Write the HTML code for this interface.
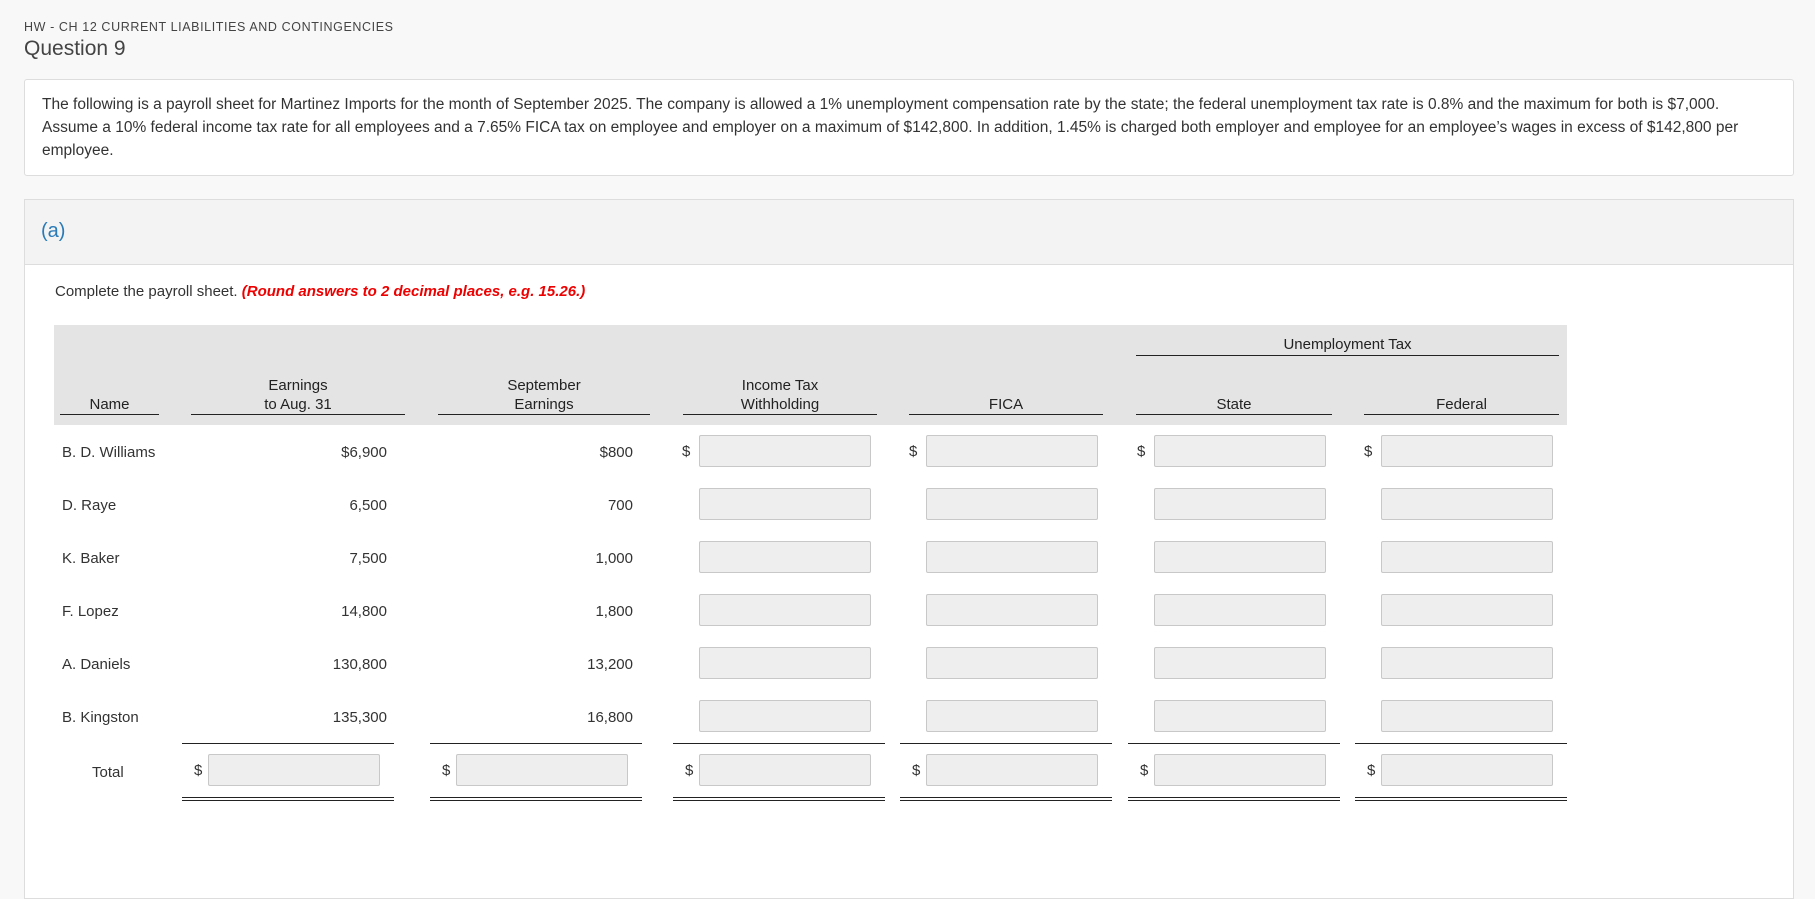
<!DOCTYPE html>
<html><head><meta charset="utf-8"><style>
body{margin:0;width:1815px;height:832px;background:#f8f8f8;font-family:"Liberation Sans",sans-serif;color:#333;position:relative;overflow:hidden}
.a{position:absolute;white-space:nowrap}
.inp{position:absolute;width:172px;height:32px;background:#eee;border:1px solid #c8c8c8;border-radius:2px;box-sizing:border-box}
.d{position:absolute;font-size:15px;color:#333}
.hl{position:absolute;height:0;border-top:1.5px solid #222}
.hd{position:absolute;font-size:15px;text-align:center;line-height:19px;color:#222}
.r{position:absolute;font-size:15px;text-align:right}
</style></head><body>
<div class="a" style="left:24px;top:20px;font-size:12.5px;letter-spacing:0.6px;color:#444">HW - CH 12 CURRENT LIABILITIES AND CONTINGENCIES</div>
<div class="a" style="left:24px;top:37px;font-size:21px;color:#444">Question 9</div>
<div class="a" style="left:24px;top:79px;width:1770px;height:97px;background:#fff;border:1px solid #ddd;border-radius:3px;box-sizing:border-box"></div>
<div class="a" style="left:42px;top:93px;font-size:15.5px;line-height:23px;color:#333;white-space:normal;width:1700px">The following is a payroll sheet for Martinez Imports for the month of September 2025. The company is allowed a 1% unemployment compensation rate by the state; the federal unemployment tax rate is 0.8% and the maximum for both is $7,000. Assume a 10% federal income tax rate for all employees and a 7.65% FICA tax on employee and employer on a maximum of $142,800. In addition, 1.45% is charged both employer and employee for an employee’s wages in excess of $142,800 per employee.</div>
<div class="a" style="left:24px;top:199px;width:1770px;height:700px;background:#fff;border:1px solid #ddd;box-sizing:border-box"></div>
<div class="a" style="left:25px;top:200px;width:1768px;height:64px;background:#f3f3f3;border-bottom:1px solid #ddd"></div>
<div class="a" style="left:41px;top:220px;font-size:20px;color:#2a7ab8">(a)</div>
<div class="a" style="left:55px;top:283px;font-size:15px">Complete the payroll sheet. <i style="color:#e00;font-weight:bold">(Round answers to 2 decimal places, e.g. 15.26.)</i></div>
<div class="a" style="left:54px;top:325px;width:1513px;height:100px;background:#e4e4e4"></div>
<div class="hd" style="left:1136px;top:335px;width:423px">Unemployment Tax</div>
<div class="hl" style="left:1136px;top:355px;width:423px"></div>
<div class="hd" style="left:60px;top:395px;width:99px">Name</div>
<div class="hd" style="left:191px;top:376px;width:214px">Earnings<br>to Aug. 31</div>
<div class="hd" style="left:438px;top:376px;width:212px">September<br>Earnings</div>
<div class="hd" style="left:683px;top:376px;width:194px">Income Tax<br>Withholding</div>
<div class="hd" style="left:909px;top:395px;width:194px">FICA</div>
<div class="hd" style="left:1136px;top:395px;width:196px">State</div>
<div class="hd" style="left:1364px;top:395px;width:195px">Federal</div>
<div class="hl" style="left:60px;top:414px;width:99px"></div>
<div class="hl" style="left:191px;top:414px;width:214px"></div>
<div class="hl" style="left:438px;top:414px;width:212px"></div>
<div class="hl" style="left:683px;top:414px;width:194px"></div>
<div class="hl" style="left:909px;top:414px;width:194px"></div>
<div class="hl" style="left:1136px;top:414px;width:196px"></div>
<div class="hl" style="left:1364px;top:414px;width:195px"></div>
<div id="rows"></div>
<script>
var names=["B. D. Williams","D. Raye","K. Baker","F. Lopez","A. Daniels","B. Kingston"];
var e1=["$6,900","6,500","7,500","14,800","130,800","135,300"];
var e2=["$800","700","1,000","1,800","13,200","16,800"];
var xs=[699,926,1154,1381];var h="";
for(var i=0;i<6;i++){var t=435+i*53;
h+='<div class="a" style="left:62px;top:'+(t+9)+'px;font-size:15px">'+names[i]+'</div>';
h+='<div class="r" style="left:200px;width:187px;top:'+(t+9)+'px">'+e1[i]+'</div>';
h+='<div class="r" style="left:440px;width:193px;top:'+(t+9)+'px">'+e2[i]+'</div>';
for(var j=0;j<4;j++){h+='<div class="inp" style="left:'+xs[j]+'px;top:'+t+'px"></div>';if(i==0)h+='<div class="d" style="left:'+(xs[j]-17)+'px;top:'+(t+8)+'px">$</div>';}}
var t=754;
h+='<div class="a" style="left:92px;top:'+(t+10)+'px;font-size:15px">Total</div>';
var tx=[208,456].concat(xs);
for(var j=0;j<6;j++){var x=tx[j];
h+='<div class="inp" style="left:'+x+'px;top:'+t+'px"></div><div class="d" style="left:'+(x-14)+'px;top:'+(t+8)+'px">$</div>';
h+='<div class="hl" style="left:'+(x-26)+'px;top:743px;width:212px"></div>';
h+='<div class="hl" style="left:'+(x-26)+'px;top:797px;width:212px"></div><div class="hl" style="left:'+(x-26)+'px;top:800px;width:212px"></div>';}
document.getElementById("rows").innerHTML=h;
</script>
</body></html>
